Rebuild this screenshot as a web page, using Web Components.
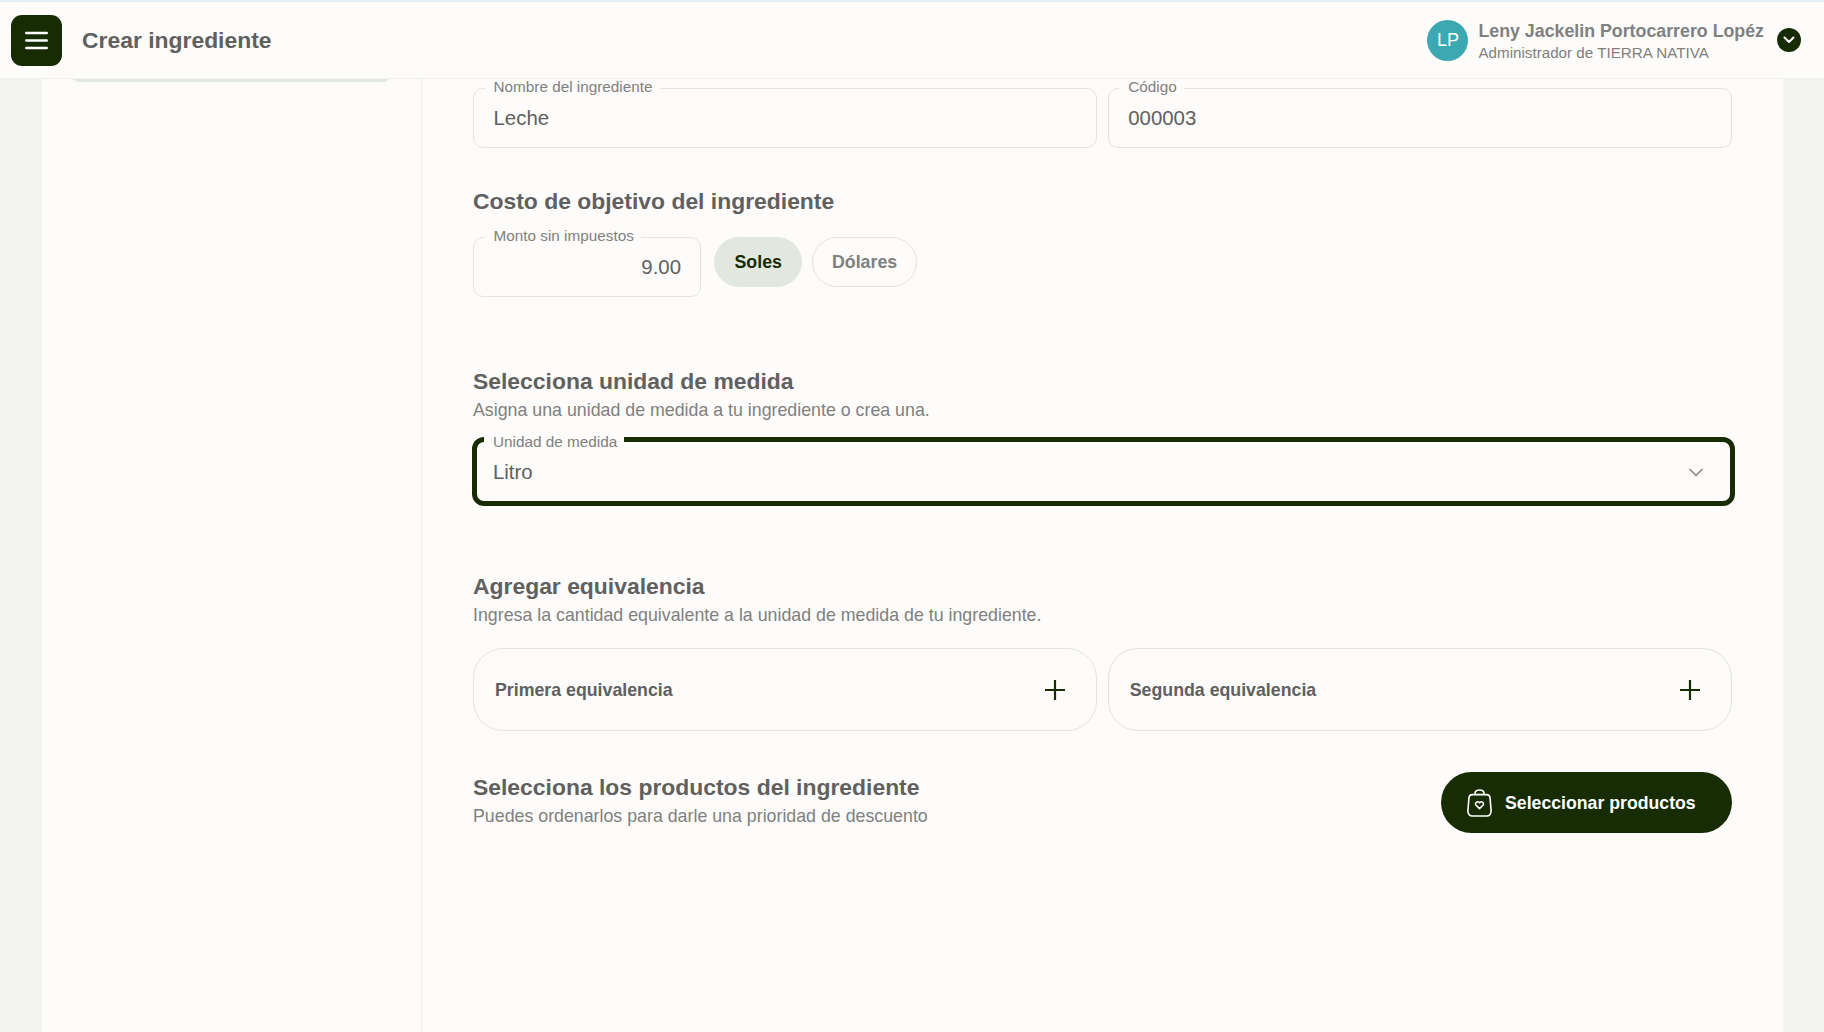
<!DOCTYPE html>
<html lang="es">
<head>
<meta charset="utf-8">
<title>Crear ingrediente</title>
<style>
  html, body { margin: 0; height: 100%; }
  body {
    height: 1032px;
    overflow: hidden;
    background: #f3f3f2;
    font-family: "Liberation Sans", Arial, sans-serif;
    color: #606060;
  }
</style>
</head>
<body>
<app-header title="Crear ingrediente" initials="LP" user="Leny Jackelin Portocarrero Lopéz" role="Administrador de TIERRA NATIVA"></app-header>
<app-shell>
  <two-columns>
    <notched-field label="Nombre del ingrediente" value="Leche"></notched-field>
    <notched-field label="Código" value="000003"></notched-field>
  </two-columns>

  <section-heading style="margin-top:39px" title="Costo de objetivo del ingrediente"></section-heading>
  <cost-row style="margin-top:22px"></cost-row>

  <section-heading style="margin-top:70px" title="Selecciona unidad de medida" text="Asigna una unidad de medida a tu ingrediente o crea una."></section-heading>
  <notched-field style="margin:16px -3px 0 -1px" variant="select" label="Unidad de medida" value="Litro"></notched-field>

  <section-heading style="margin-top:66px" title="Agregar equivalencia" text="Ingresa la cantidad equivalente a la unidad de medida de tu ingrediente."></section-heading>
  <two-columns style="margin-top:22px">
    <add-card label="Primera equivalencia"></add-card>
    <add-card label="Segunda equivalencia"></add-card>
  </two-columns>

  <products-row style="margin-top:41px"></products-row>
</app-shell>

<script>
class AppHeader extends HTMLElement {
  constructor() {
    super();
    this.attachShadow({ mode: 'open' });
  }

  connectedCallback() {
    this.shadowRoot.innerHTML = `
      <style>
        :host {
          display: flex;
          align-items: center;
          box-sizing: border-box;
          height: 79px;
          padding: 0 23px 0 11px;
          background: #fdfcfa;
          border-top: 2px solid #e4edf3;
          border-bottom: 1px solid #f1f1ef;
          position: relative;
          z-index: 2;
        }
        .menu {
          width: 51px;
          height: 51px;
          border-radius: 11px;
          background: #172c03;
          display: flex;
          align-items: center;
          justify-content: center;
          flex: none;
        }
        h1 {
          margin: 0 0 0 20px;
          font-size: 22.9px;
          line-height: 30px;
          font-weight: 700;
          color: #606060;
          flex: 1;
        }
        .avatar {
          width: 41px;
          height: 41px;
          border-radius: 50%;
          background: #3ca8b1;
          color: #fff;
          font-size: 18px;
          display: flex;
          align-items: center;
          justify-content: center;
          flex: none;
        }
        .who { margin: 2px 0 0 10px; }
        .name {
          font-size: 17.8px;
          line-height: 22px;
          font-weight: 700;
          color: #808080;
        }
        .role {
          font-size: 15.2px;
          line-height: 20px;
          margin-top: 1px;
          color: #808080;
        }
        .toggle {
          width: 24px;
          height: 24px;
          border-radius: 50%;
          background: #172c03;
          margin-left: 13px;
          display: flex;
          align-items: center;
          justify-content: center;
          flex: none;
        }
      </style>
      <div class="menu">
        <svg width="23" height="19" viewBox="0 0 23 19" fill="none" stroke="#fff" stroke-width="2.6" stroke-linecap="round">
          <path d="M1.3 2h20.4M1.3 9.5h20.4M1.3 17h20.4"/>
        </svg>
      </div>
      <h1>${this.getAttribute('title')}</h1>
      <div class="avatar">${this.getAttribute('initials')}</div>
      <div class="who">
        <div class="name">${this.getAttribute('user')}</div>
        <div class="role">${this.getAttribute('role')}</div>
      </div>
      <div class="toggle">
        <svg width="12" height="8" viewBox="0 0 12 8" fill="none" stroke="#fff" stroke-width="2" stroke-linecap="round" stroke-linejoin="round">
          <path d="M1.5 1.5 6 6l4.5-4.5"/>
        </svg>
      </div>
    `;
  }
}

class AppShell extends HTMLElement {
  constructor() {
    super();
    this.attachShadow({ mode: 'open' });
  }

  connectedCallback() {
    this.shadowRoot.innerHTML = `
      <style>
        :host {
          display: flex;
          box-sizing: border-box;
          height: 953px;
          margin: 0 41px 0 42px;
          background: #fdfcfa;
        }
        aside {
          width: 320px;
          flex: none;
          border-right: 1px solid #f0f0ee;
          padding: 0 30px 0 29px;
        }
        .pill {
          height: 16px;
          margin-top: -13px;
          background: #e3e8e0;
          border-radius: 16px;
        }
        main {
          flex: 1;
          min-width: 0;
          padding: 9px 51px 0 51px;
        }
      </style>
      <aside><div class="pill"></div></aside>
      <main><slot></slot></main>
    `;
  }
}

class TwoColumns extends HTMLElement {
  constructor() {
    super();
    this.attachShadow({ mode: 'open' });
    this.shadowRoot.innerHTML = `
      <style>
        :host {
          display: grid;
          grid-template-columns: 1fr 1fr;
          gap: 10.5px;
        }
      </style>
      <slot></slot>
    `;
  }
}

class NotchedField extends HTMLElement {
  constructor() {
    super();
    this.attachShadow({ mode: 'open' });
  }

  connectedCallback() {
    const isSelect = this.getAttribute('variant') === 'select';
    this.shadowRoot.innerHTML = `
      <style>
        :host {
          display: block;
          position: relative;
          box-sizing: border-box;
          height: 60px;
          border: 1.5px solid #e3e3e1;
          border-radius: 10px;
          background: #fdfcfa;
        }
        :host([variant="select"]) {
          height: 69px;
          border: 5px solid #172c03;
          border-radius: 12px;
        }
        :host([align="right"]) .value {
          justify-content: flex-end;
        }
        .label {
          position: absolute;
          top: -11px;
          left: 10.5px;
          padding: 0 7px 0 9px;
          background: #fdfcfa;
          font-size: 15.3px;
          line-height: 17px;
          color: #808080;
          white-space: nowrap;
        }
        :host([variant="select"]) .label {
          top: -9px;
          left: 7px;
        }
        .value {
          display: flex;
          align-items: center;
          height: 100%;
          padding: 0 19px 0 19.5px;
          box-sizing: border-box;
          font-size: 20.4px;
          color: #606060;
        }
        :host([variant="select"]) .value {
          padding: 2px 27px 0 16px;
          justify-content: space-between;
        }
      </style>
      <span class="label">${this.getAttribute('label')}</span>
      <div class="value">
        <span>${this.getAttribute('value')}</span>
        ${isSelect ? `<svg width="14" height="9" viewBox="0 0 14 9" fill="none" stroke="#808080" stroke-width="1.4"><path d="M.6 1 7 7.6 13.4 1"/></svg>` : ''}
      </div>
    `;
  }
}

class SectionHeading extends HTMLElement {
  constructor() {
    super();
    this.attachShadow({ mode: 'open' });
  }

  connectedCallback() {
    const text = this.getAttribute('text');
    this.shadowRoot.innerHTML = `
      <style>
        :host { display: block; }
        h2 {
          margin: 0;
          font-size: 22.9px;
          line-height: 28px;
          font-weight: 700;
          color: #606060;
        }
        p {
          margin: 4px 0 0;
          font-size: 17.8px;
          line-height: 22px;
          color: #808080;
        }
      </style>
      <h2>${this.getAttribute('title')}</h2>
      ${text ? `<p>${text}</p>` : ''}
    `;
  }
}

class ChoicePill extends HTMLElement {
  constructor() {
    super();
    this.attachShadow({ mode: 'open' });
    this.shadowRoot.innerHTML = `
      <style>
        :host {
          display: flex;
          align-items: center;
          box-sizing: border-box;
          height: 50px;
          padding: 0 18.5px;
          border: 1.5px solid #e3e3e1;
          border-radius: 25px;
          font-size: 17.8px;
          font-weight: 700;
          color: #808080;
        }
        :host([selected]) {
          padding: 0 19.5px;
          background: #e2e8df;
          border-color: #e2e8df;
          color: #172c03;
        }
      </style>
      <slot></slot>
    `;
  }
}

class CostRow extends HTMLElement {
  constructor() {
    super();
    this.attachShadow({ mode: 'open' });
    this.shadowRoot.innerHTML = `
      <style>
        :host {
          display: flex;
          align-items: flex-start;
          gap: 10px;
        }
        notched-field { width: 228px; margin-right: 3px; }
      </style>
      <notched-field align="right" label="Monto sin impuestos" value="9.00"></notched-field>
      <choice-pill selected>Soles</choice-pill>
      <choice-pill>Dólares</choice-pill>
    `;
  }
}

class AddCard extends HTMLElement {
  constructor() {
    super();
    this.attachShadow({ mode: 'open' });
  }

  connectedCallback() {
    this.shadowRoot.innerHTML = `
      <style>
        :host {
          display: flex;
          align-items: center;
          justify-content: space-between;
          box-sizing: border-box;
          height: 83px;
          padding: 0 31px 0 21px;
          border: 1.5px solid #e3e3e1;
          border-radius: 30px;
          font-size: 17.75px;
          font-weight: 700;
          color: #606060;
        }
        span { padding-top: 2px; }
      </style>
      <span>${this.getAttribute('label')}</span>
      <svg width="20" height="20" viewBox="0 0 20 20" fill="none" stroke="#172c03" stroke-width="2.2">
        <path d="M10 0v20M0 10h20"/>
      </svg>
    `;
  }
}

class ProductsRow extends HTMLElement {
  constructor() {
    super();
    this.attachShadow({ mode: 'open' });
    this.shadowRoot.innerHTML = `
      <style>
        :host {
          display: flex;
          align-items: center;
          justify-content: space-between;
        }
        section-heading { margin-bottom: 6px; }
        button {
          display: flex;
          align-items: center;
          gap: 13px;
          box-sizing: border-box;
          width: 291px;
          height: 61px;
          padding: 0 0 0 26px;
          border: 0;
          border-radius: 31px;
          background: #172c03;
          color: #fff;
          font: 700 17.7px "Liberation Sans", Arial, sans-serif;
        }
        button span { padding-top: 2px; }
      </style>
      <section-heading title="Selecciona los productos del ingrediente" text="Puedes ordenarlos para darle una prioridad de descuento"></section-heading>
      <button>
        <svg width="25" height="28" viewBox="0 0 25 28" fill="none" stroke="#fff" stroke-width="1.6" stroke-linecap="round" stroke-linejoin="round">
          <path d="M5.4 5.6h14.2c1.7 0 3 1.1 3.4 2.8l1.1 13.2c.2 3-1.6 5.4-4.4 5.4H5.3c-2.8 0-4.6-2.4-4.4-5.4L2 8.4c.4-1.7 1.7-2.8 3.4-2.8Z"/>
          <path d="M8 5.6V4.4C8 2.4 9.8 1 12.5 1S17 2.4 17 4.4v1.2"/>
          <path d="M12.5 19.6l-3.4-3.4c-1.9-2.2 1.5-4.8 3.4-2.4 1.9-2.4 5.3.2 3.4 2.4l-3.4 3.4Z"/>
        </svg>
        <span>Seleccionar productos</span>
      </button>
    `;
  }
}

customElements.define('section-heading', SectionHeading);
customElements.define('notched-field', NotchedField);
customElements.define('choice-pill', ChoicePill);
customElements.define('cost-row', CostRow);
customElements.define('add-card', AddCard);
customElements.define('products-row', ProductsRow);
customElements.define('two-columns', TwoColumns);
customElements.define('app-header', AppHeader);
customElements.define('app-shell', AppShell);
</script>
</body>
</html>
